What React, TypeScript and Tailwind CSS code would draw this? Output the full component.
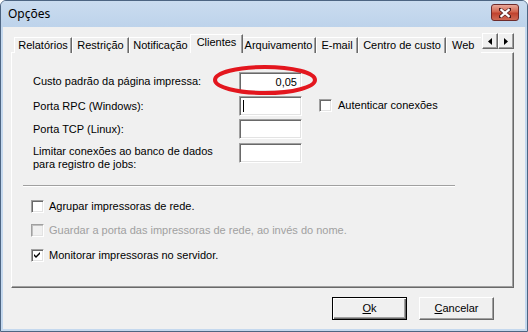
import React from "react";

const font = { fontFamily: '"Liberation Sans", Arial, sans-serif' };

function Input({ value, cursor }: { value?: string; cursor?: boolean }) {
  return (
    <div className="w-[63px] h-[20px] bg-white border border-t-[#a0a0a0] border-l-[#a0a0a0] border-b-white border-r-white shadow-[inset_1px_1px_0_#696969,inset_-1px_-1px_0_#e3e3e3] flex items-center justify-end pr-[4px] text-[11px] text-black relative">
      {cursor && <div className="absolute left-[3px] top-[3px] w-px h-[12px] bg-black" />}
      {value}
    </div>
  );
}

function Check({ checked, disabled }: { checked?: boolean; disabled?: boolean }) {
  return (
    <div
      className={
        "w-[13px] h-[13px] shrink-0 border border-t-[#a0a0a0] border-l-[#a0a0a0] border-b-white border-r-white flex items-center justify-center " +
        (disabled
          ? "bg-[#f0f0f0] shadow-[inset_1px_1px_0_#c0c0c0,inset_-1px_-1px_0_#e3e3e3]"
          : "bg-white shadow-[inset_1px_1px_0_#696969,inset_-1px_-1px_0_#e3e3e3]")
      }
    >
      {checked && (
        <svg width="7" height="7" viewBox="0 0 7 7">
          <path d="M0 2 L2 4 L6 0 L6 2 L2 6 L0 4 Z" fill="#000" />
        </svg>
      )}
    </div>
  );
}

function Tab({ label, w, selected, left }: { label: string; w: number; selected?: boolean; left?: boolean }) {
  return (
    <div
      style={{ width: w }}
      className={
        "shrink-0 flex items-center bg-[#f0f0f0] border-l border-t border-l-white border-t-white shadow-[inset_-1px_0_0_#a0a0a0] border-r border-r-[#696969] text-[11px] text-black whitespace-nowrap " +
        (left ? "justify-start pl-[5px] " : "justify-center ") +
        (selected ? "h-[20px] -mb-px relative z-10 pb-[4px] -mx-[2px]" : "h-[16px]")
      }
    >
      {label}
    </div>
  );
}

function ArrowBtn({ dir }: { dir: "l" | "r" }) {
  return (
    <div className="w-[16px] h-[16px] bg-[#f0f0f0] border border-t-white border-l-white border-b-[#696969] border-r-[#696969] shadow-[inset_-1px_-1px_0_#a0a0a0] flex items-center justify-center">
      <svg width="4" height="7" viewBox="0 0 4 7">
        {dir === "l" ? <path d="M4 0 L0 3.5 L4 7 Z" fill="#000" /> : <path d="M0 0 L4 3.5 L0 7 Z" fill="#000" />}
      </svg>
    </div>
  );
}

function Button({ children, def }: { children: React.ReactNode; def?: boolean }) {
  return (
    <div
      className={
        "w-[75px] h-[23px] bg-[#f0f0f0] flex items-center justify-center text-[11px] text-black " +
        (def
          ? "border border-black shadow-[inset_1px_1px_0_#fff,inset_-1px_-1px_0_#696969,inset_-2px_-2px_0_#a0a0a0]"
          : "border border-t-white border-l-white border-b-[#696969] border-r-[#696969] shadow-[inset_-1px_-1px_0_#a0a0a0]")
      }
    >
      {children}
    </div>
  );
}

function CheckRow({ label, checked, disabled }: { label: string; checked?: boolean; disabled?: boolean }) {
  return (
    <div className="h-[13px] flex items-center gap-[5px] -ml-[2px] leading-[13px]">
      <Check checked={checked} disabled={disabled} />
      <span className={disabled ? "text-[#a0a0a0]" : "text-black"}>{label}</span>
    </div>
  );
}

export default function App() {
  return (
    <div style={font} className="w-[528px] h-[332px] flex flex-col bg-[#c4d8ee] border border-[#4d6582] rounded-t-[6px] overflow-hidden relative">
      {/* Title bar */}
      <div className="h-[26px] shrink-0 flex items-center justify-between pl-[7px] pr-[8px] bg-[linear-gradient(#cadcef,#bdd3eb)]">
        <span className="text-[12px] text-black" style={{ fontFamily: '"Noto Sans", "Open Sans", sans-serif' }}>
          Opções
        </span>
        <div className="w-[28px] h-[17px] mt-[-3px] rounded-[3px] border border-[#6e2b2b] bg-[linear-gradient(#e9a99a,#d2654f_45%,#c0422e_55%,#cf6a55)] flex items-center justify-center">
          <svg width="12" height="10" viewBox="0 0 12 10">
            <path d="M1 1 L11 9 M11 1 L1 9" stroke="#4a1a1a" strokeWidth="3.6" strokeLinecap="square" />
            <path d="M1.5 1.2 L10.5 8.8 M10.5 1.2 L1.5 8.8" stroke="#fff" strokeWidth="2.2" />
          </svg>
        </div>
      </div>

      {/* Client area */}
      <div className="flex-1 mx-[2px] mb-[2px] bg-[#f0f0f0] flex flex-col pl-[8px] pr-[11px] pt-[6px]">
        {/* Tabs row */}
        <div className="h-[19px] flex items-end relative">
          <div className="w-[470px] h-[20px] flex items-end pl-[3px] overflow-hidden relative z-10 -mb-px">
            <Tab label="Relatórios" w={58} />
            <Tab label="Restrição" w={57} />
            <Tab label="Notificação" w={63} />
            <Tab label="Clientes" w={53} selected />
            <Tab label="Arquivamento" w={75} />
            <Tab label="E-mail" w={42} />
            <Tab label="Centro de custo" w={88} />
            <Tab label="Web" w={50} left />
          </div>
          <div className="absolute right-0 top-0 flex z-20">
            <ArrowBtn dir="l" />
            <ArrowBtn dir="r" />
          </div>
        </div>

        {/* Panel */}
        <div className="h-[236px] border-l border-t border-white border-r border-b border-r-[#696969] border-b-[#696969] shadow-[inset_-1px_-1px_0_#a0a0a0] flex flex-col pl-[21px] pt-[19px] relative">
          <div className="grid grid-cols-[206px_63px_auto] gap-y-[3.5px] text-[11px] text-black">
            <div className="pt-[1px]">Custo padrão da página impressa:</div>
            <Input value="0,05" />
            <div />

            <div className="pt-[2px]">Porta RPC (Windows):</div>
            <Input cursor />
            <div className="flex items-center gap-[6px] pl-[17px]">
              <Check />
              <span>Autenticar conexões</span>
            </div>

            <div className="pt-[2px]">Porta TCP (Linux):</div>
            <Input />
            <div />

            <div className="pt-[2px] leading-[13px]">
              Limitar conexões ao banco de dados
              <br />
              para registro de jobs:
            </div>
            <Input />
            <div />
          </div>

          <div className="ml-[-10px] mt-[14px] w-[432px] h-[2px] border-t border-[#a0a0a0] border-b border-b-white" />

          <div className="flex flex-col gap-[11.5px] mt-[13px] text-[11px]">
            <CheckRow label="Agrupar impressoras de rede." />
            <CheckRow label="Guardar a porta das impressoras de rede, ao invés do nome." disabled />
            <CheckRow label="Monitorar impressoras no servidor." checked />
          </div>

          {/* red annotation ellipse */}
          <svg className="absolute left-[200px] top-[11px] pointer-events-none" width="106" height="32" viewBox="0 0 106 32">
            <ellipse cx="53" cy="16" rx="50" ry="13" fill="none" stroke="#e3161e" strokeWidth="4" />
          </svg>
        </div>

        {/* Buttons */}
        <div className="flex justify-end gap-[12px] pr-[20px] mt-[9px]">
          <Button def>
            <span><u>O</u>k</span>
          </Button>
          <Button>
            <span><u>C</u>ancelar</span>
          </Button>
        </div>
      </div>
    </div>
  );
}
